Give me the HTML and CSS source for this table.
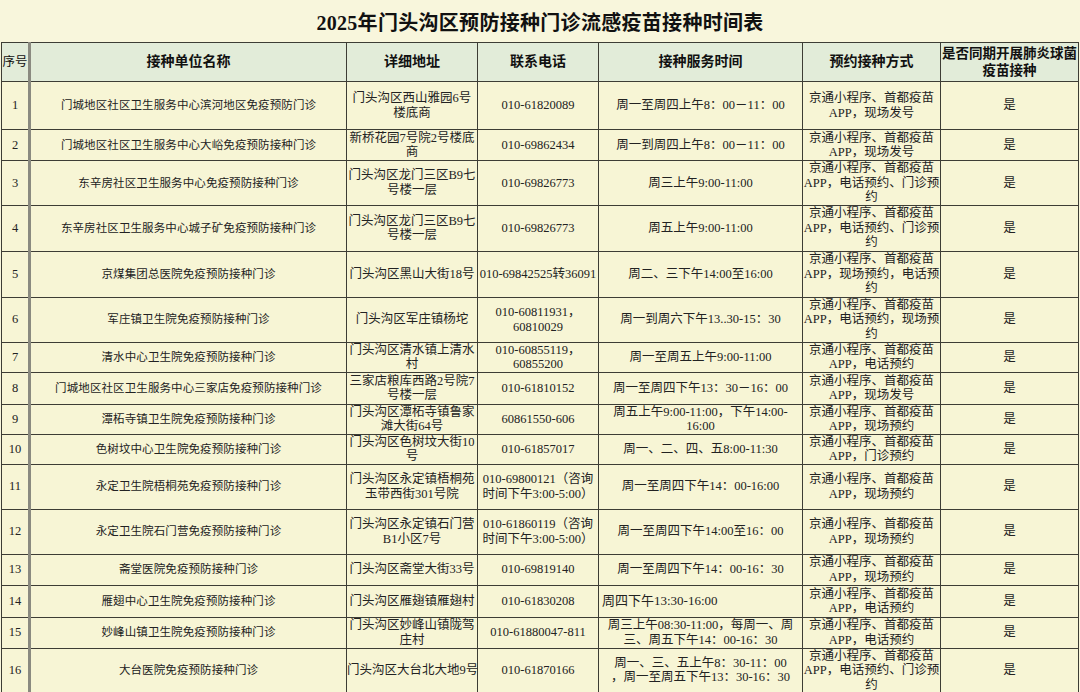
FILE: index.html
```html
<!DOCTYPE html>
<html lang="zh-CN">
<head>
<meta charset="utf-8">
<title>2025年门头沟区预防接种门诊流感疫苗接种时间表</title>
<link rel="stylesheet" href="styles.css">
</head>
<body>
<div class="page">
  <h1 class="title">2025年门头沟区预防接种门诊流感疫苗接种时间表</h1>
  <table class="sched">
    <colgroup>
      <col class="c-no"><col class="c-name"><col class="c-addr"><col class="c-tel"><col class="c-time"><col class="c-way"><col class="c-pneu">
    </colgroup>
    <thead>
      <tr class="h39">
        <th class="th-no">序号</th>
        <th>接种单位名称</th>
        <th>详细地址</th>
        <th>联系电话</th>
        <th>接种服务时间</th>
        <th>预约接种方式</th>
        <th class="th-pneu">是否同期开展肺炎球菌<br>疫苗接种</th>
      </tr>
    </thead>
    <tbody>
      <tr class="h48">
        <td class="no">1</td><td class="name">门城地区社区卫生服务中心滨河地区免疫预防门诊</td>
        <td>门头沟区西山雅园6号<br>楼底商</td><td class="tel">010-61820089</td>
        <td>周一至周四上午8：00－11：00</td><td>京通小程序、首都疫苗<br>APP，现场发号</td><td>是</td>
      </tr>
      <tr class="h31">
        <td class="no">2</td><td class="name">门城地区社区卫生服务中心大峪免疫预防接种门诊</td>
        <td>新桥花园7号院2号楼底<br>商</td><td class="tel">010-69862434</td>
        <td>周一到周四上午8：00－11：00</td><td>京通小程序、首都疫苗<br>APP，现场发号</td><td>是</td>
      </tr>
      <tr class="h44">
        <td class="no">3</td><td class="name">东辛房社区卫生服务中心免疫预防接种门诊</td>
        <td>门头沟区龙门三区B9七<br>号楼一层</td><td class="tel">010-69826773</td>
        <td>周三上午9:00-11:00</td><td>京通小程序、首都疫苗<br>APP，电话预约、门诊预<br>约</td><td>是</td>
      </tr>
      <tr class="h46">
        <td class="no">4</td><td class="name">东辛房社区卫生服务中心城子矿免疫预防接种门诊</td>
        <td>门头沟区龙门三区B9七<br>号楼一层</td><td class="tel">010-69826773</td>
        <td>周五上午9:00-11:00</td><td>京通小程序、首都疫苗<br>APP，电话预约、门诊预<br>约</td><td>是</td>
      </tr>
      <tr class="h46">
        <td class="no">5</td><td class="name">京煤集团总医院免疫预防接种门诊</td>
        <td>门头沟区黑山大街18号</td><td class="tel">010-69842525转36091</td>
        <td>周二、三下午14:00至16:00</td><td>京通小程序、首都疫苗<br>APP，现场预约，电话预<br>约</td><td>是</td>
      </tr>
      <tr class="h45">
        <td class="no">6</td><td class="name">军庄镇卫生院免疫预防接种门诊</td>
        <td>门头沟区军庄镇杨坨</td><td class="tel">010-60811931，<br>60810029</td>
        <td>周一到周六下午13..30-15：30</td><td>京通小程序、首都疫苗<br>APP，电话预约，现场预<br>约</td><td>是</td>
      </tr>
      <tr class="h29">
        <td class="no">7</td><td class="name">清水中心卫生院免疫预防接种门诊</td>
        <td>门头沟区清水镇上清水<br>村</td><td class="tel">010-60855119，<br>60855200</td>
        <td>周一至周五上午9:00-11:00</td><td>京通小程序、首都疫苗<br>APP，电话预约</td><td>是</td>
      </tr>
      <tr class="h32">
        <td class="no">8</td><td class="name">门城地区社区卫生服务中心三家店免疫预防接种门诊</td>
        <td>三家店粮库西路2号院7<br>号楼一层</td><td class="tel">010-61810152</td>
        <td>周一至周四下午13：30－16：00</td><td>京通小程序、首都疫苗<br>APP，现场发号</td><td>是</td>
      </tr>
      <tr class="h30">
        <td class="no">9</td><td class="name">潭柘寺镇卫生院免疫预防接种门诊</td>
        <td>门头沟区潭柘寺镇鲁家<br>滩大街64号</td><td class="tel">60861550-606</td>
        <td>周五上午9:00-11:00，下午14:00-<br>16:00</td><td>京通小程序、首都疫苗<br>APP，现场预约</td><td>是</td>
      </tr>
      <tr class="h30">
        <td class="no">10</td><td class="name">色树坟中心卫生院免疫预防接种门诊</td>
        <td>门头沟区色树坟大街10<br>号</td><td class="tel">010-61857017</td>
        <td>周一、二、四、五8:00-11:30</td><td>京通小程序、首都疫苗<br>APP，门诊预约</td><td>是</td>
      </tr>
      <tr class="h45">
        <td class="no">11</td><td class="name">永定卫生院梧桐苑免疫预防接种门诊</td>
        <td>门头沟区永定镇梧桐苑<br>玉带西街301号院</td><td class="tel">010-69800121（咨询<br>时间下午3:00-5:00）</td>
        <td>周一至周四下午14：00-16:00</td><td>京通小程序、首都疫苗<br>APP，现场预约</td><td>是</td>
      </tr>
      <tr class="h45">
        <td class="no">12</td><td class="name">永定卫生院石门营免疫预防接种门诊</td>
        <td>门头沟区永定镇石门营<br>B1小区7号</td><td class="tel">010-61860119（咨询<br>时间下午3:00-5:00）</td>
        <td>周一至周四下午14:00至16：00</td><td>京通小程序、首都疫苗<br>APP，现场预约</td><td>是</td>
      </tr>
      <tr class="h31">
        <td class="no">13</td><td class="name">斋堂医院免疫预防接种门诊</td>
        <td>门头沟区斋堂大街33号</td><td class="tel">010-69819140</td>
        <td>周一至周四下午14：00-16：30</td><td>京通小程序、首都疫苗<br>APP，现场预约</td><td>是</td>
      </tr>
      <tr class="h32">
        <td class="no">14</td><td class="name">雁翅中心卫生院免疫预防接种门诊</td>
        <td>门头沟区雁翅镇雁翅村</td><td class="tel">010-61830208</td>
        <td class="left">周四下午13:30-16:00</td><td>京通小程序、首都疫苗<br>APP，电话预约</td><td>是</td>
      </tr>
      <tr class="h31">
        <td class="no">15</td><td class="name">妙峰山镇卫生院免疫预防接种门诊</td>
        <td>门头沟区妙峰山镇陇驾<br>庄村</td><td class="tel">010-61880047-811</td>
        <td>周三上午08:30-11:00，每周一、周<br>三、周五下午14：00-16：30</td><td>京通小程序、首都疫苗<br>APP，电话预约</td><td>是</td>
      </tr>
      <tr class="h42">
        <td class="no">16</td><td class="name">大台医院免疫预防接种门诊</td>
        <td>门头沟区大台北大地9号</td><td class="tel">010-61870166</td>
        <td>周一、三、五上午8：30-11：00<br>，周一至周五下午13：30-16：30</td><td>京通小程序、首都疫苗<br>APP，电话预约、门诊预<br>约</td><td>是</td>
      </tr>
    </tbody>
  </table>
</div>
</body>
</html>
```

FILE: styles.css
```css
* { box-sizing: border-box; }
html, body { margin: 0; padding: 0; }
body {
  background: #f8f6dc;
  color: #1a1a1a;
  font-family: "Liberation Serif", "Noto Sans CJK SC", serif;
  width: 1080px;
  height: 692px;
  overflow: hidden;
}
.page {
  display: flex;
  flex-direction: column;
}
.title {
  margin: 0;
  height: 42px;
  display: flex;
  align-items: center;
  justify-content: center;
  font-size: 20px;
  font-weight: 700;
  letter-spacing: 0.3px;
  color: #111;
}
.sched {
  margin-left: 1px;
  width: 1077px;
  border-collapse: collapse;
  table-layout: fixed;
  font-size: 12.5px;
  line-height: 14.5px;
}
.c-no { width: 28px; }
.c-name { width: 317px; }
.c-addr { width: 131px; }
.c-tel { width: 121px; }
.c-time { width: 204px; }
.c-way { width: 138px; }
.c-pneu { width: 138px; }

.sched th, .sched td {
  border: 1px solid #3d3d35;
  padding: 0;
  text-align: center;
  vertical-align: middle;
  white-space: nowrap;
  overflow: visible;
}
.sched th {
  background: #e2ecd9;
  font-size: 14px;
  font-weight: 700;
  color: #111;
}
.sched th.th-no {
  font-weight: 400;
  font-size: 12.5px;
}
.sched th.th-pneu {
  font-size: 13.5px;
  line-height: 17px;
}
.sched td {
  background: #f7f5d5;
  color: #222;
}
.sched .no, .sched .th-no {
  border-right: 3px solid #8a8a80;
}
.sched td.name {
  font-size: 11.5px;
  letter-spacing: 0.1px;
}
.sched td.left {
  text-align: left;
  padding-left: 3px;
  font-size: 13px;
}
.h29 { height: 29px; }
.h30 { height: 30px; }
.h31 { height: 31px; }
.h32 { height: 32px; }
.h39 { height: 39px; }
.h42 { height: 42px; }
.h44 { height: 44px; }
.h45 { height: 45px; }
.h46 { height: 46px; }
.h48 { height: 48px; }
```
